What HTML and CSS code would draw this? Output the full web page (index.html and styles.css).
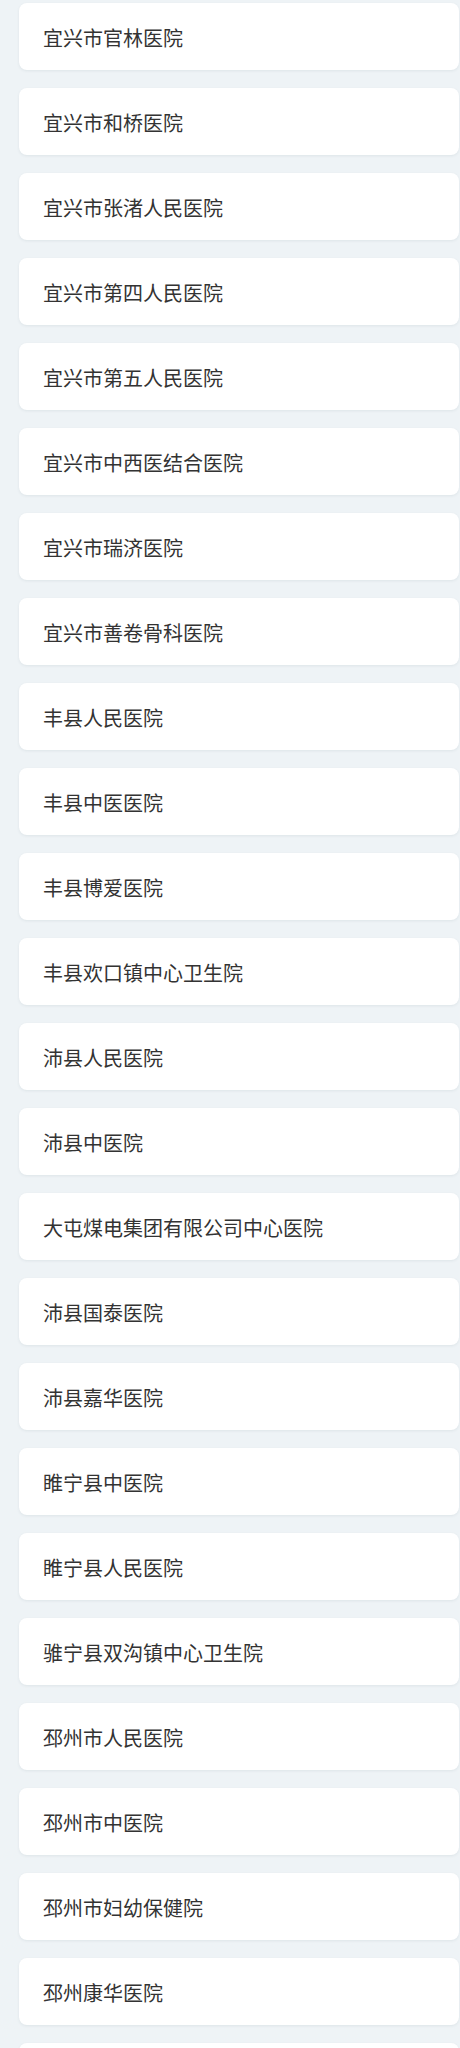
FILE: index.html
```html
<!DOCTYPE html>
<html lang="zh-CN">
<head>
<meta charset="utf-8">
<title>医院列表</title>
<link rel="stylesheet" href="styles.css">
</head>
<body>
<div class="list">
  <div class="card">宜兴市官林医院</div>
  <div class="card">宜兴市和桥医院</div>
  <div class="card">宜兴市张渚人民医院</div>
  <div class="card">宜兴市第四人民医院</div>
  <div class="card">宜兴市第五人民医院</div>
  <div class="card">宜兴市中西医结合医院</div>
  <div class="card">宜兴市瑞济医院</div>
  <div class="card">宜兴市善卷骨科医院</div>
  <div class="card">丰县人民医院</div>
  <div class="card">丰县中医医院</div>
  <div class="card">丰县博爱医院</div>
  <div class="card">丰县欢口镇中心卫生院</div>
  <div class="card">沛县人民医院</div>
  <div class="card">沛县中医院</div>
  <div class="card">大屯煤电集团有限公司中心医院</div>
  <div class="card">沛县国泰医院</div>
  <div class="card">沛县嘉华医院</div>
  <div class="card">睢宁县中医院</div>
  <div class="card">睢宁县人民医院</div>
  <div class="card">骓宁县双沟镇中心卫生院</div>
  <div class="card">邳州市人民医院</div>
  <div class="card">邳州市中医院</div>
  <div class="card">邳州市妇幼保健院</div>
  <div class="card">邳州康华医院</div>
  <div class="card"></div>
</div>
</body>
</html>
```
FILE: styles.css
```css
html, body {
  margin: 0;
  padding: 0;
  background: #eef3f6;
}
body {
  font-family: "Noto Sans CJK SC", "Noto Sans", sans-serif;
  color: #333333;
}
.list {
  display: flex;
  flex-direction: column;
  gap: 18px;
  padding: 3px 1px 0 19px;
}
.card {
  box-sizing: border-box;
  height: 67px;
  flex: none;
  padding: 2px 24px 0 24px;
  display: flex;
  align-items: center;
  background: #ffffff;
  border-radius: 8px;
  box-shadow: 0 1px 3px rgba(40, 60, 80, 0.08);
  font-size: 20px;
  line-height: 28px;
  white-space: nowrap;
}
```
